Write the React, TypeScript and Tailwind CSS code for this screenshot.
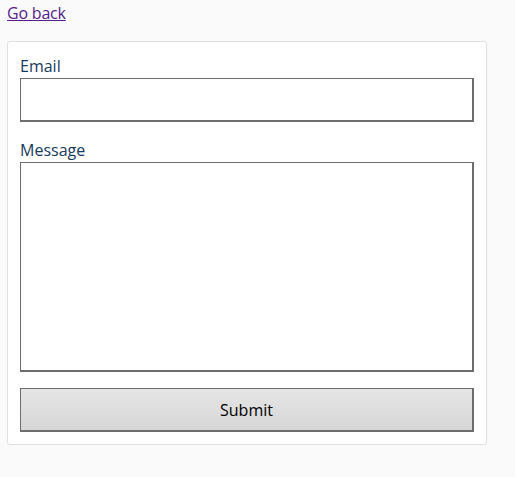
export default function App() {
  const fieldClass =
    "w-full bg-white border-[#6d6d6d] border-t border-l border-r-2 border-b-2 outline-none";

  return (
    <main
      className="min-h-[477px] bg-[#fafafa] px-[7px] text-[16px] text-black"
      style={{ fontFamily: '"Open Sans", "Noto Sans", sans-serif' }}
    >
      <a href="#" className="block leading-[24px] pt-[1px] text-[#551a8b] underline w-fit tracking-[-0.2px]">
        Go back
      </a>

      {/* Form card */}
      <form
        className="mt-[16px] w-[480px] bg-white border border-[#e0e0e0] rounded-[3px] p-3 flex flex-col"
        onSubmit={(e) => e.preventDefault()}
      >
        <label className="leading-[24px] text-[#17395c]">Email</label>
        <input type="email" className={`${fieldClass} h-[44px]`} />

        <label className="mt-4 leading-[24px] text-[#17395c]">Message</label>
        <textarea className={`${fieldClass} h-[210px] resize-none`} />

        <button
          type="submit"
          className="mt-4 h-[44px] w-full border-[#6d6d6d] border-t border-l border-r-2 border-b-2 bg-gradient-to-b from-[#e6e6e6] to-[#d6d6d6] text-black"
        >
          Submit
        </button>
      </form>
    </main>
  );
}
